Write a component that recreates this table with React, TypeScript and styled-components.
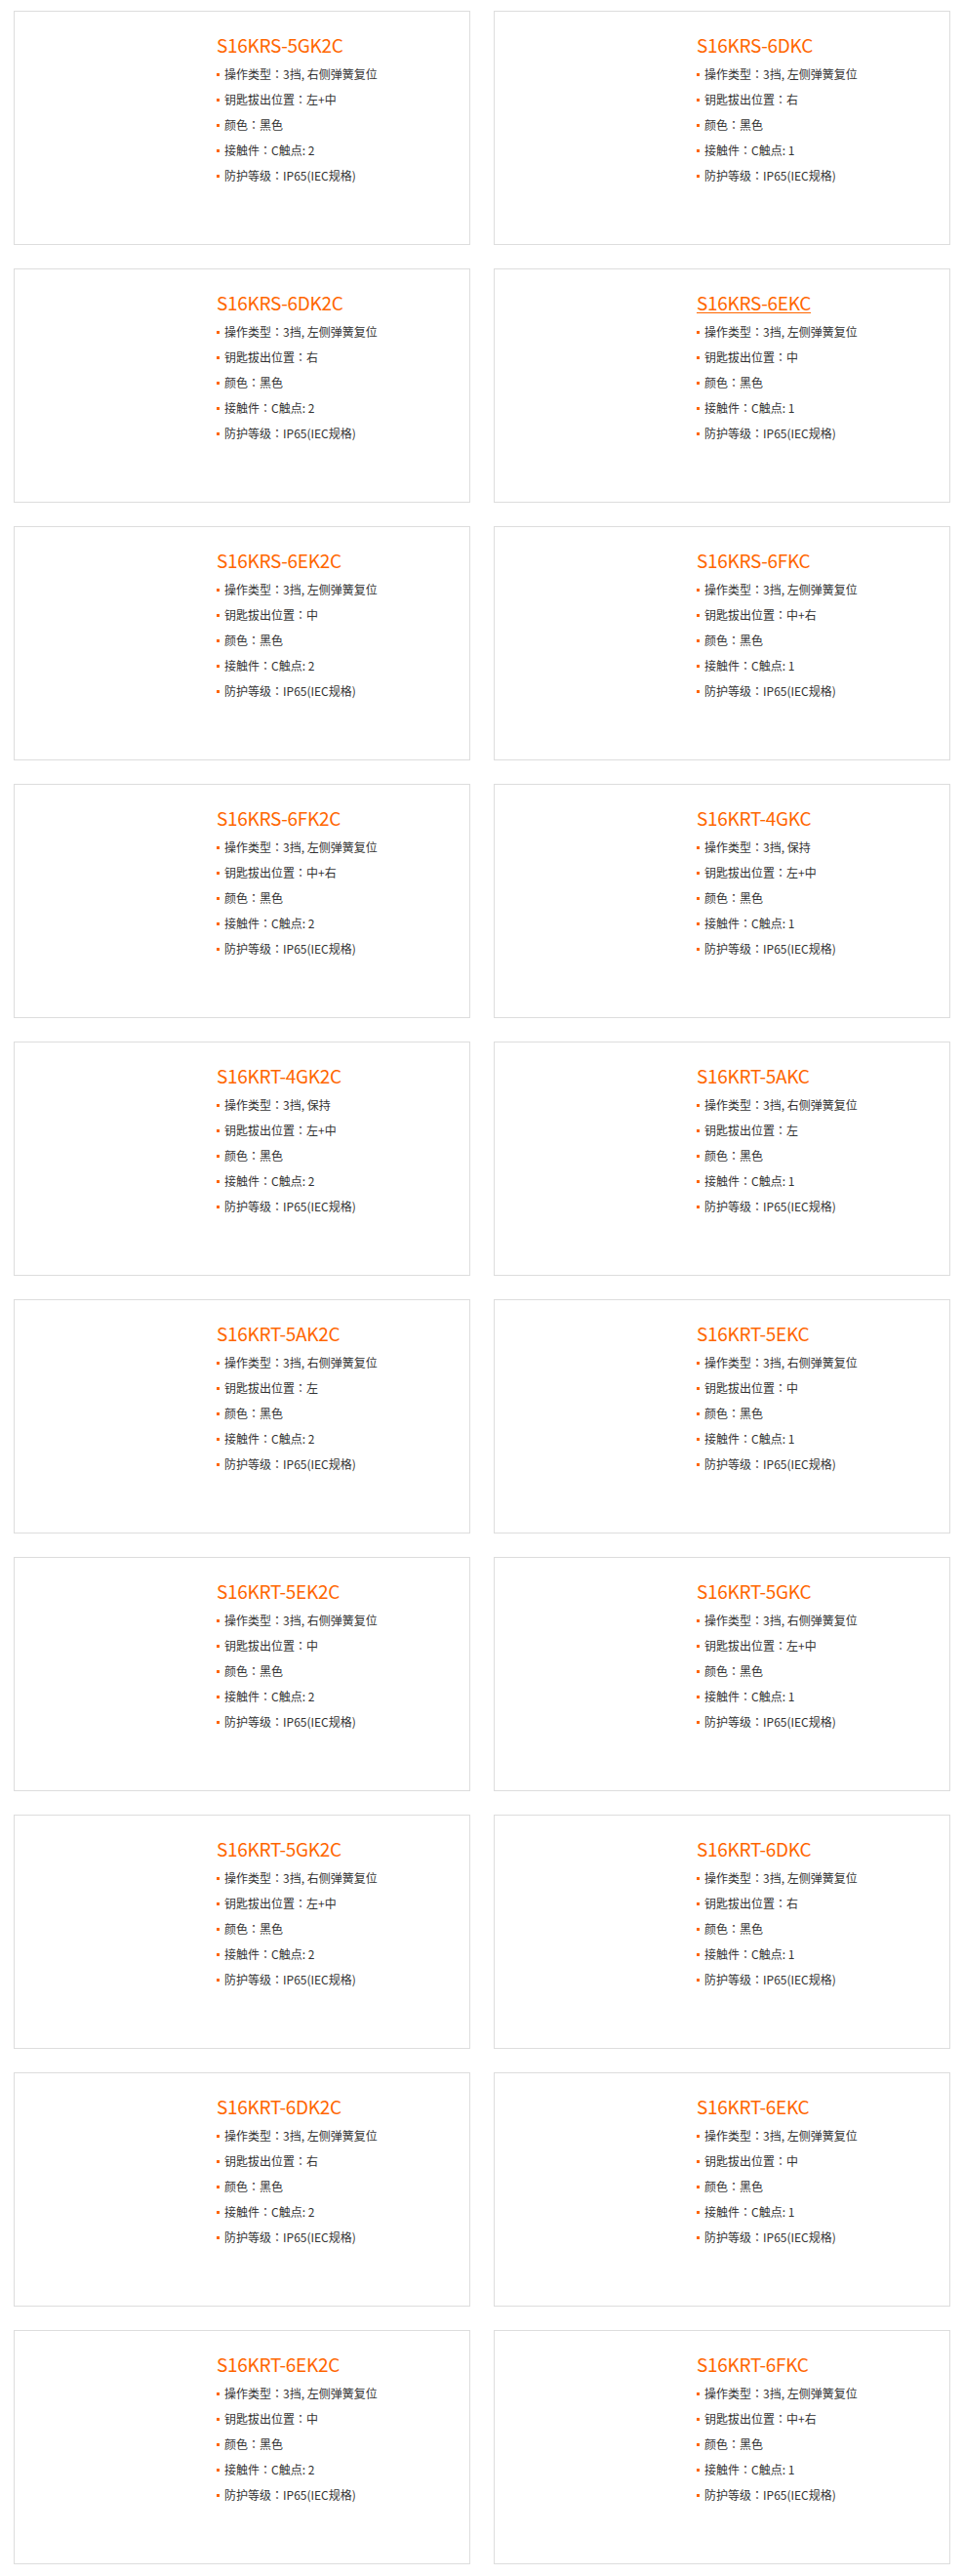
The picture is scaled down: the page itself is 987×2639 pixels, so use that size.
import React from "react";
import styled, { createGlobalStyle } from "styled-components";

const GlobalStyle = createGlobalStyle`
  html, body { margin: 0; padding: 0; background: #fff; }
  body { font-family: "Noto Sans CJK SC", "Noto Sans", sans-serif; }
`;

type Product = {
  name: string;
  op: string;
  pos: string;
  contacts: number;
  active?: boolean;
};

const R = "3挡, 右侧弹簧复位";
const L = "3挡, 左侧弹簧复位";
const H = "3挡, 保持";

const products: Product[] = [
  { name: "S16KRS-5GK2C", op: R, pos: "左+中", contacts: 2 },
  { name: "S16KRS-6DKC", op: L, pos: "右", contacts: 1 },
  { name: "S16KRS-6DK2C", op: L, pos: "右", contacts: 2 },
  { name: "S16KRS-6EKC", op: L, pos: "中", contacts: 1, active: true },
  { name: "S16KRS-6EK2C", op: L, pos: "中", contacts: 2 },
  { name: "S16KRS-6FKC", op: L, pos: "中+右", contacts: 1 },
  { name: "S16KRS-6FK2C", op: L, pos: "中+右", contacts: 2 },
  { name: "S16KRT-4GKC", op: H, pos: "左+中", contacts: 1 },
  { name: "S16KRT-4GK2C", op: H, pos: "左+中", contacts: 2 },
  { name: "S16KRT-5AKC", op: R, pos: "左", contacts: 1 },
  { name: "S16KRT-5AK2C", op: R, pos: "左", contacts: 2 },
  { name: "S16KRT-5EKC", op: R, pos: "中", contacts: 1 },
  { name: "S16KRT-5EK2C", op: R, pos: "中", contacts: 2 },
  { name: "S16KRT-5GKC", op: R, pos: "左+中", contacts: 1 },
  { name: "S16KRT-5GK2C", op: R, pos: "左+中", contacts: 2 },
  { name: "S16KRT-6DKC", op: L, pos: "右", contacts: 1 },
  { name: "S16KRT-6DK2C", op: L, pos: "右", contacts: 2 },
  { name: "S16KRT-6EKC", op: L, pos: "中", contacts: 1 },
  { name: "S16KRT-6EK2C", op: L, pos: "中", contacts: 2 },
  { name: "S16KRT-6FKC", op: L, pos: "中+右", contacts: 1 },
];

const Page = styled.div`
  padding: 11px 13px 13px 14px;
`;

const Grid = styled.div`
  display: grid;
  grid-template-columns: 468px 468px;
  column-gap: 24px;
  row-gap: 24px;
`;

const Card = styled.div`
  box-sizing: border-box;
  height: 240px;
  border: 1px solid #dddddd;
  background: #fff;
  padding: 21px 0 0 207px;
`;

const Title = styled.a<{ $active?: boolean }>`
  display: inline-block;
  font-size: 19px;
  letter-spacing: -0.3px;
  line-height: 26px;
  color: #ff6600;
  text-decoration: ${(p) => (p.$active ? "underline" : "none")};
  text-underline-offset: 2px;
  text-decoration-thickness: 1px;
  margin-bottom: 4px;
  cursor: pointer;
`;

const Specs = styled.ul`
  list-style: none;
  margin: 0;
  padding: 0;
`;

const Spec = styled.li`
  display: flex;
  align-items: center;
  font-size: 12px;
  line-height: 26px;
  color: #333333;
  white-space: pre;

  &::before {
    content: "";
    width: 3px;
    height: 3px;
    background: #ff6600;
    margin-right: 5px;
    flex: none;
  }
`;

const Colon = styled.span`
  font-family: "Noto Sans CJK TC", "Noto Sans CJK SC", sans-serif;
`;

function Row({ label, value }: { label: string; value: string }) {
  return (
    <Spec>
      {label}
      <Colon>：</Colon>
      {value}
    </Spec>
  );
}

export default function App() {
  return (
    <>
      <GlobalStyle />
      <Page>
        <Grid>
          {products.map((p) => (
            <Card key={p.name}>
              <Title $active={p.active}>{p.name}</Title>
              <Specs>
                <Row label="操作类型" value={p.op} />
                <Row label="钥匙拔出位置" value={p.pos} />
                <Row label="颜色" value="黑色" />
                <Row label="接触件" value={`C触点: ${p.contacts}`} />
                <Row label="防护等级" value="IP65(IEC规格)" />
              </Specs>
            </Card>
          ))}
        </Grid>
      </Page>
    </>
  );
}
